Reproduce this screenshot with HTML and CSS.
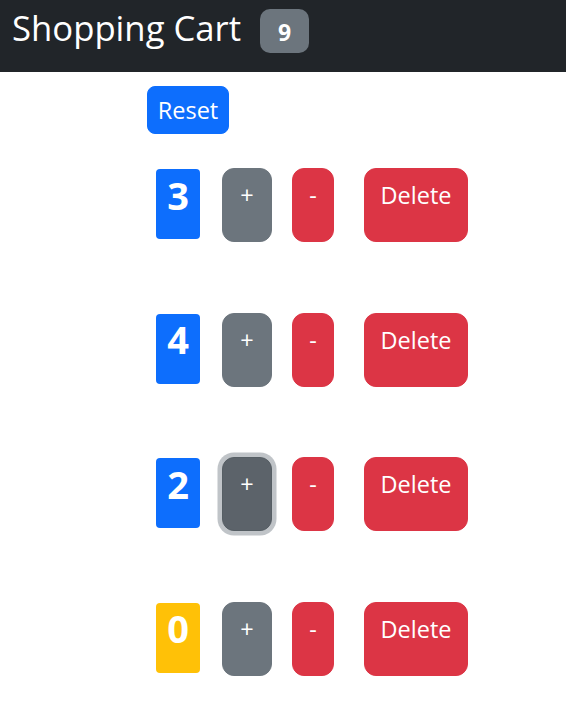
FILE: index.html
```html
<!DOCTYPE html>
<html lang="en">
<head>
<meta charset="utf-8">
<title>Shopping Cart</title>
<link rel="stylesheet" href="styles.css">
</head>
<body>
<nav class="navbar">
  <span class="brand">Shopping Cart</span>
  <span class="total">9</span>
</nav>
<main class="content">
  <button class="btn reset">Reset</button>
  <div class="counters">
    <div class="counter">
      <span class="count primary">3</span>
      <button class="btn inc">+</button>
      <button class="btn dec">-</button>
      <button class="btn del">Delete</button>
    </div>
    <div class="counter">
      <span class="count primary">4</span>
      <button class="btn inc">+</button>
      <button class="btn dec">-</button>
      <button class="btn del">Delete</button>
    </div>
    <div class="counter">
      <span class="count primary">2</span>
      <button class="btn inc focused">+</button>
      <button class="btn dec">-</button>
      <button class="btn del">Delete</button>
    </div>
    <div class="counter">
      <span class="count warning">0</span>
      <button class="btn inc">+</button>
      <button class="btn dec">-</button>
      <button class="btn del">Delete</button>
    </div>
  </div>
</main>
</body>
</html>
```

FILE: styles.css
```css
* { box-sizing: border-box; }
html, body {
  margin: 0;
  padding: 0;
  background: #fff;
  font-family: "Open Sans", "Noto Sans", sans-serif;
  color: #212529;
}
.navbar {
  height: 72px;
  background: #212529;
  display: flex;
  align-items: flex-start;
  padding: 7px 12px 0 12px;
  gap: 19px;
}
.brand {
  color: #fff;
  font-size: 34.7px;
  line-height: 42px;
  font-weight: 400;
}
.total {
  margin-top: 2px;
  width: 49px;
  height: 44px;
  border-radius: 10px;
  background: #6c757d;
  color: #fff;
  font-weight: 700;
  font-size: 23px;
  line-height: 1;
  display: flex;
  align-items: center;
  justify-content: center;
  padding-top: 2px;
}
.content {
  padding-top: 14px;
}
.btn {
  font-family: inherit;
  color: #fff;
  border: 1px solid transparent;
  cursor: pointer;
  text-align: center;
  margin: 0;
}
.reset {
  display: block;
  margin-left: 147px;
  width: 82px;
  padding: 1px 0 0 0;
  font-size: 23.5px;
  line-height: 45px;
  background: #0d6efd;
  border-color: #0d6efd;
  border-radius: 8px;
}
.counters {
  display: flex;
  flex-direction: column;
  gap: 70.5px;
  padding-top: 34px;
  padding-left: 156px;
}
.counter {
  display: flex;
  align-items: flex-start;
}
.count {
  margin-top: 1px;
  width: 44px;
  height: 70px;
  border-radius: 4px;
  color: #fff;
  font-weight: 700;
  font-size: 38px;
  line-height: 45.6px;
  padding-top: 3.5px;
  text-align: center;
}
.primary { background: #0d6efd; }
.warning { background: #ffc107; }
.inc, .dec, .del {
  padding: 8px 0 28px 0;
  font-size: 23.5px;
  line-height: 36px;
  border-radius: 12px;
  display: block;
}
.inc {
  width: 50px;
  margin-left: 22px;
  background: #6c757d;
  border-color: #6c757d;
}
.inc.focused {
  background: #5c636a;
  border-color: #565e64;
  box-shadow: 0 0 0 4.5px rgba(130, 138, 145, 0.5);
}
.dec {
  width: 42px;
  margin-left: 20px;
  background: #dc3545;
  border-color: #dc3545;
}
.del {
  width: 104px;
  margin-left: 30px;
  background: #dc3545;
  border-color: #dc3545;
}
```
